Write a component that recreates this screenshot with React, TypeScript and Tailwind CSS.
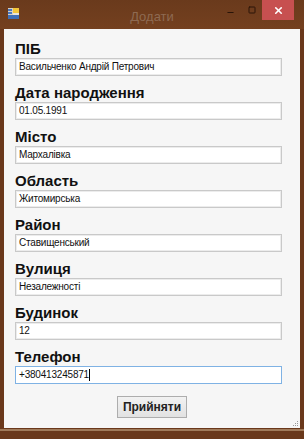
import { Minus, Square, X } from "lucide-react";

const fields = [
  { label: "ПІБ", value: "Васильченко Андрій Петрович" },
  { label: "Дата народження", value: "01.05.1991" },
  { label: "Місто", value: "Мархалівка" },
  { label: "Область", value: "Житомирська" },
  { label: "Район", value: "Ставищенський" },
  { label: "Вулиця", value: "Незалежності" },
  { label: "Будинок", value: "12" },
];

const AppIcon = () => (
  <svg width="11" height="11" viewBox="0 0 11 11">
    <rect x="0" y="0" width="11" height="11" fill="#d9d2c4" />
    <rect x="5" y="0" width="6" height="5" fill="#f3c63a" />
    <rect x="0" y="1" width="4" height="2" fill="#4a78c0" />
    <rect x="0" y="4" width="4" height="2" fill="#4a78c0" />
    <rect x="0" y="7" width="11" height="4" fill="#3f6fb8" />
    <rect x="5" y="5" width="6" height="2" fill="#e9e4da" />
  </svg>
);

export default function App() {
  return (
    <div
      className="w-[304px] h-[439px] bg-[#6a381b] flex flex-col overflow-hidden"
      style={{ fontFamily: '"Liberation Sans", Arial, sans-serif' }}
    >
      {/* title bar */}
      <div className="h-[29px] flex items-start relative bg-gradient-to-b from-[#6a3a1c] to-[#74401f]">
        <div className="pl-[8px] pt-[8px]">
          <AppIcon />
        </div>
        <div className="absolute left-0 right-0 top-[7px] text-center text-[13px] text-[#8e6a52]">Додати</div>
        <div className="ml-auto flex items-start">
          <div className="w-[21px] h-[20px] flex items-center justify-center text-[#2a1408] pt-[4px]">
            <Minus size={9} strokeWidth={3} />
          </div>
          <div className="w-[21px] h-[20px] flex items-center justify-center text-[#2a1408]">
            <Square size={8} strokeWidth={3} />
          </div>
          <div className="w-[32px] h-[20px] mr-[10px] bg-[#c75050] flex items-center justify-center text-white">
            <X size={11} strokeWidth={3.5} />
          </div>
        </div>
      </div>

      {/* client area */}
      <div className="mx-[4px] h-[399px] bg-[#f6f6f6] pt-[11px] pl-[11px] flex flex-col relative">
        {fields.map((f) => (
          <div key={f.label} className="flex flex-col mb-[8px]">
            <div className="h-[18px] leading-[18px] text-[15px] font-bold text-[#111]">{f.label}</div>
            <div className="w-[267px] h-[18px] bg-white border border-[#c9c9c9] shadow-[inset_0_0_0_1px_#ececec] text-[10px] tracking-[-0.2px] leading-[16px] pl-[3px] text-[#111]">
              {f.value}
            </div>
          </div>
        ))}
        <div className="flex flex-col">
          <div className="h-[18px] leading-[18px] text-[15px] font-bold text-[#111]">Телефон</div>
          <div className="w-[267px] h-[18px] bg-white border border-[#7fb2e4] text-[10px] tracking-[-0.2px] leading-[16px] pl-[3px] text-[#111] flex items-center">
            +380413245871
            <span className="inline-block w-[1px] h-[12px] bg-black" />
          </div>
        </div>
        <div className="flex justify-center mt-[12px] pr-[11px]">
          <div className="w-[70px] h-[22px] border border-[#adadad] bg-gradient-to-b from-[#f2f2f2] to-[#e2e2e2] text-[12px] font-semibold text-[#222] flex items-center justify-center">
            Прийняти
          </div>
        </div>
        <div className="absolute right-[2px] bottom-[2px] grid grid-cols-3 gap-[1px]">
          <span />
          <span />
          <span className="w-[1px] h-[1px] bg-[#999]" />
          <span />
          <span className="w-[1px] h-[1px] bg-[#999]" />
          <span className="w-[1px] h-[1px] bg-[#999]" />
          <span className="w-[1px] h-[1px] bg-[#999]" />
          <span className="w-[1px] h-[1px] bg-[#999]" />
          <span className="w-[1px] h-[1px] bg-[#999]" />
        </div>
      </div>
      <div className="h-[2px] mt-[1px] bg-[#a07a5a]" />
    </div>
  );
}
